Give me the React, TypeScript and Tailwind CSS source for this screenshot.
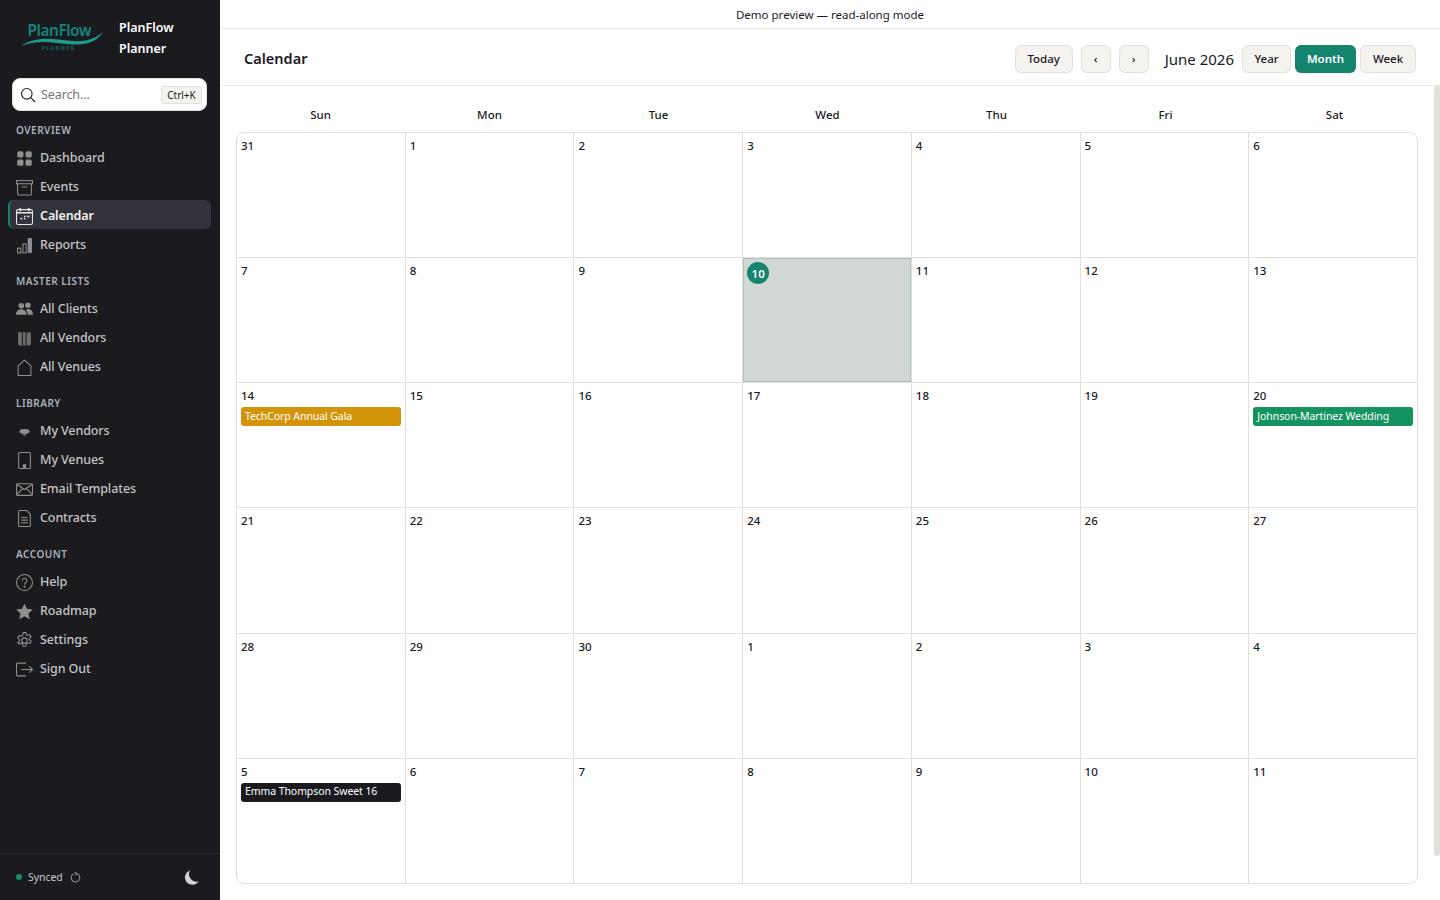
import type { ReactNode } from "react";

const FONT = "font-['Noto_Sans','Open_Sans',sans-serif]";

const icon = "h-[17px] w-[17px] shrink-0 text-[#8f8f8f]";
const line = { fill: "none", stroke: "currentColor", strokeWidth: 1 };

const Icons: Record<string, ReactNode> = {
  dashboard: (
    <svg className={icon} viewBox="0 0 16 16" fill="currentColor">
      <rect x="1.200" y="1.200" width="5.800" height="5.800" rx="1.500" />
      <rect x="9" y="1.200" width="5.800" height="5.800" rx="1.500" />
      <rect x="1.200" y="9" width="5.800" height="5.800" rx="1.500" />
      <rect x="9" y="9" width="5.800" height="5.800" rx="1.500" />
    </svg>
  ),
  events: (
    <svg className={icon} viewBox="0 0 16 16" {...line}>
      <rect x="0.500" y="1.500" width="15" height="3" />
      <path d="M1.500 4.500V14a1 1 0 0 0 1 1h11a1 1 0 0 0 1-1V4.500M5.500 7.500h5" />
    </svg>
  ),
  calendar: (
    <svg className="h-[17px] w-[17px] shrink-0 text-[#e8e8e8]" viewBox="0 0 16 16" {...line}>
      <rect x="0.500" y="1.500" width="15" height="14" rx="1.500" />
      <path d="M0.500 4.500h15M4 0v3M12 0v3" strokeWidth="1.400" />
      <path d="M4 10h2M7.500 10h1.500M10.500 8h2M7.500 8h1.500" strokeWidth="1.400" />
    </svg>
  ),
  reports: (
    <svg className={icon} viewBox="0 0 16 16">
      <rect x="1.500" y="10.500" width="3" height="4.500" {...line} />
      <rect x="6.500" y="6.500" width="3" height="8.500" {...line} />
      <rect x="11" y="1" width="4" height="14" fill="currentColor" />
    </svg>
  ),
  clients: (
    <svg className={icon} viewBox="0 0 16 16" fill="currentColor">
      <circle cx="5" cy="4.500" r="2.600" />
      <circle cx="11.200" cy="4" r="2.600" />
      <path d="M0 13c0-3.300 2.200-5.300 5-5.300s5 2 5 5.300zM11 13c0-2-.5-3.600-1.600-5 .6-.3 1.200-.4 1.900-.4 2.700 0 4.700 2 4.700 5.400z" />
    </svg>
  ),
  vendors: (
    <svg className="h-[17px] w-[17px] shrink-0 text-[#6f6f6f]" viewBox="0 0 16 16" fill="currentColor">
      <path d="M2 2h3.500v12.500H3L2 13.500zM6.500 2H9v12.500H6.500zM10 2.500l4-.5v11.500l-1 1h-3z" />
    </svg>
  ),
  venues: (
    <svg className={icon} viewBox="0 0 16 16" {...line}>
      <path d="M2 15.500V6.500L8 1l6 5.500v9z" strokeLinejoin="round" />
    </svg>
  ),
  myVendors: (
    <svg className={icon} viewBox="0 0 16 16" fill="currentColor">
      <ellipse cx="8" cy="8" rx="4.800" ry="2.300" />
      <rect x="6.500" y="10.800" width="3" height="1" />
    </svg>
  ),
  myVenues: (
    <svg className={icon} viewBox="0 0 16 16">
      <rect x="2.500" y="0.500" width="11" height="15" rx="1" {...line} />
      <rect x="6.500" y="11.500" width="3" height="3.500" fill="currentColor" />
    </svg>
  ),
  email: (
    <svg className={icon} viewBox="0 0 16 16" {...line}>
      <rect x="0.500" y="2.500" width="15" height="11" rx="1" />
      <path d="M0.500 3L8 8l7.500-5M0.500 13L6.500 7M15.500 13l-6-6" />
    </svg>
  ),
  contracts: (
    <svg className={icon} viewBox="0 0 16 16" {...line}>
      <path d="M2.500 1.500A1 1 0 0 1 3.500 .5H10l3.500 3.500v10.500a1 1 0 0 1-1 1h-9a1 1 0 0 1-1-1z" />
      <path d="M5 7h6M5 9.500h6M5 12h6" />
    </svg>
  ),
  help: (
    <svg className={icon} viewBox="0 0 16 16" {...line}>
      <circle cx="8" cy="8" r="7.500" />
      <path d="M5.800 6.200a2.200 2.200 0 1 1 3.500 1.800c-.8.500-1.300 1-1.300 2" />
      <circle cx="8" cy="12" r=".5" fill="currentColor" />
    </svg>
  ),
  roadmap: (
    <svg className={icon} viewBox="0 0 16 16" fill="currentColor">
      <path d="M8 .5l2.300 5 5.500.6-4.100 3.700 1.200 5.400L8 12.400l-4.900 2.800 1.200-5.400L.2 6.100l5.500-.6z" />
    </svg>
  ),
  settings: (
    <svg className={icon} viewBox="0 0 16 16" {...line}>
      <circle cx="8" cy="8" r="2.500" />
      <path d="M6.700.6h2.600l.4 2 1.200.6 1.900-.8 1.300 2.200-1.500 1.400v1.300l1.700 1.300-1.300 2.300-2.100-.7-1.200.7-.4 2.500H6.700l-.4-2.300-1.200-.7-2.100.8L1.700 9.900l1.600-1.300V7L1.700 5.600 3 3.300l2.100.8 1.200-.7z" strokeLinejoin="round" />
    </svg>
  ),
  signOut: (
    <svg className={icon} viewBox="0 0 16 16" {...line}>
      <path d="M9.500 2H1.500a1 1 0 0 0-1 1v10a1 1 0 0 0 1 1h8M5 8h10.500M12.500 5l3 3-3 3" />
    </svg>
  ),
};

const SECTIONS = [
  {
    title: "Overview",
    items: [
      ["Dashboard", "dashboard"],
      ["Events", "events"],
      ["Calendar", "calendar"],
      ["Reports", "reports"],
    ],
  },
  {
    title: "Master Lists",
    items: [
      ["All Clients", "clients"],
      ["All Vendors", "vendors"],
      ["All Venues", "venues"],
    ],
  },
  {
    title: "Library",
    items: [
      ["My Vendors", "myVendors"],
      ["My Venues", "myVenues"],
      ["Email Templates", "email"],
      ["Contracts", "contracts"],
    ],
  },
  {
    title: "Account",
    items: [
      ["Help", "help"],
      ["Roadmap", "roadmap"],
      ["Settings", "settings"],
      ["Sign Out", "signOut"],
    ],
  },
];

const WEEKDAYS = ["Sun", "Mon", "Tue", "Wed", "Thu", "Fri", "Sat"];

const DAYS = [
  31, 1, 2, 3, 4, 5, 6,
  7, 8, 9, 10, 11, 12, 13,
  14, 15, 16, 17, 18, 19, 20,
  21, 22, 23, 24, 25, 26, 27,
  28, 29, 30, 1, 2, 3, 4,
  5, 6, 7, 8, 9, 10, 11,
];

const EVENTS: Record<number, { label: string; color: string }> = {
  14: { label: "TechCorp Annual Gala", color: "bg-[#d4940a]" },
  20: { label: "Johnson-Martinez Wedding", color: "bg-[#15935f]" },
  35: { label: "Emma Thompson Sweet 16", color: "bg-[#1a1a1f]" },
};

function Logo() {
  return (
    <svg className="h-[36px] w-[86px] shrink-0" viewBox="0 0 86 36">
      <text x="8.500" y="18" fontSize="15.500" fontWeight="600" fill="#13857a" fontFamily="Noto Sans, sans-serif" letterSpacing="-0.5">
        PlanFlow
      </text>
      <path d="M2 28C10 22 22 20 34 21C50 22 68 28 84 14C74 30 54 27 38 25C24 23 12 24 2 28Z" fill="#1c9c8d" />
      <text x="23" y="31.500" fontSize="4.800" fontWeight="600" fill="#13756c" fontFamily="Noto Sans, sans-serif" letterSpacing="1.600">
        PLANNER
      </text>
    </svg>
  );
}

function Sidebar() {
  return (
    <aside className="flex h-full w-[220px] shrink-0 flex-col bg-[#1a1a1f]">
      <div className="flex h-[78px] items-center gap-[14px] pb-[6px] pl-[19px]">
        <Logo />
        <div className="pt-[4px] text-[12.500px] font-semibold leading-[21px] text-white">
          <div>PlanFlow</div>
          <div>Planner</div>
        </div>
      </div>

      <div className="mx-[12px] flex h-[33px] w-[195px] items-center rounded-lg border border-[#e2e0da] bg-white pl-[7px] pr-[4px]">
        <svg className="h-[16px] w-[16px] text-[#222]" viewBox="0 0 16 16" fill="none" stroke="currentColor" strokeWidth="1.100">
          <circle cx="6.800" cy="6.800" r="5.300" />
          <path d="M10.700 10.700L15 15" />
        </svg>
        <span className="ml-[5px] flex-1 pt-[2px] text-[12.500px] tracking-[-0.1px] text-[#757575]">Search...</span>
        <span className="flex h-[18px] w-[41px] items-center justify-center rounded-[3px] border border-[#e2e0da] bg-[#f4f3f0] pt-[1px] text-[10px] text-[#1a1a1f]">
          Ctrl+K
        </span>
      </div>

      <nav className="mt-[12px] flex flex-col gap-[16px]">
        {SECTIONS.map((section) => (
          <div key={section.title}>
            <div className="flex h-[14px] items-center pl-[16px] text-[10px] font-semibold uppercase tracking-[0.5px] text-[#a9b2ba]">
              {section.title}
            </div>
            <div className="mt-[5px] flex flex-col">
              {section.items.map(([label, key]) => {
                const active = label === "Calendar";
                return (
                  <div
                    className={
                      active
                        ? "mx-[8px] flex h-[29px] w-[203px] items-center gap-[7px] rounded-md border-l-2 border-[#14846f] bg-[#32323a] pl-[6px] pt-[4px] pb-[1px] text-[12.500px] font-semibold tracking-[-0.1px] text-[#f2f2f2]"
                        : "mx-[8px] flex h-[29px] w-[203px] items-center gap-[7px] pl-[8px] pt-[4px] pb-[1px] text-[12.500px] font-medium tracking-[-0.1px] text-[#c4c4c6]"
                    }
                    key={label}
                  >
                    {Icons[key]}
                    {label}
                  </div>
                );
              })}
            </div>
          </div>
        ))}
      </nav>

      <div className="mt-auto flex h-[47px] items-center border-t border-[#2a2a30] pl-[16px] pr-[21px]">
        <span className="h-[6px] w-[6px] rounded-full bg-[#15935f]" />
        <span className="ml-[6px] pt-[2px] text-[10.500px] tracking-[-0.05px] text-[#c4cbd2]">Synced</span>
        <svg className="ml-[7px] h-[11px] w-[11px] text-[#8f8f8f]" viewBox="0 0 12 12" fill="none" stroke="currentColor" strokeWidth="1.200">
          <path d="M7.500 1.700A4.700 4.700 0 1 1 3.800 2" />
          <path d="M5 0l2.500 1.700L5.500 3.800" />
        </svg>
        <svg className="ml-auto h-[15px] w-[15px] text-[#d4d4d4]" viewBox="0 0 16 16" fill="currentColor">
          <path d="M6.500.5A7.800 7.800 0 0 0 15.500 12 7.800 7.800 0 1 1 6.500.5z" />
        </svg>
      </div>
    </aside>
  );
}

function ToolButton({ children, className }: { children: ReactNode; className: string }) {
  return (
    <button className={`flex h-[28px] items-center justify-center rounded-md border border-[#e2e0da] bg-[#f4f3f0] text-[11.500px] font-medium text-[#1a1a1f] ${className}`}>
      {children}
    </button>
  );
}

function Header() {
  return (
    <header className="flex h-[57px] shrink-0 items-center border-b border-[#eceae6] bg-white px-[24px] pt-[4px]">
      <h1 className="text-[14.500px] font-semibold text-[#1a1a1f]">Calendar</h1>
      <div className="ml-auto flex items-center">
        <ToolButton className="w-[58px]">Today</ToolButton>
        <ToolButton className="ml-[8px] w-[30px] text-[10px]">‹</ToolButton>
        <ToolButton className="ml-[8px] w-[30px] text-[10px]">›</ToolButton>
        <span className="ml-[16px] text-[15px] font-normal text-[#1a1a1f]">June 2026</span>
        <ToolButton className="ml-[8px] w-[49px]">Year</ToolButton>
        <button className="ml-[4px] flex h-[28px] w-[61px] items-center justify-center rounded-md bg-[#14846f] text-[11.500px] font-semibold text-white">
          Month
        </button>
        <ToolButton className="ml-[4px] w-[56px]">Week</ToolButton>
      </div>
    </header>
  );
}

function DayCell({ day, index }: { day: number; index: number }) {
  const event = EVENTS[index];
  const today = index === 10;
  return (
    <div
      className={
        today
          ? "border border-[#a8c7bd] bg-[#d1d8d4] px-[3px] pt-[3px]"
          : "bg-white px-[4px] pt-[4px]"
      }
    >
      {today ? (
        <span className="flex h-[22px] w-[22px] items-center justify-center rounded-full bg-[#14846f] text-[11.500px] font-semibold text-white">
          {day}
        </span>
      ) : (
        <div className="h-[17px] text-[11.500px] font-medium leading-[17px] text-[#1a1a1f]">{day}</div>
      )}
      {event && (
        <div className={`mt-[3px] flex h-[19px] items-center truncate rounded-[3px] px-[4px] text-[10.500px] tracking-[-0.08px] text-white ${event.color}`}>
          {event.label}
        </div>
      )}
    </div>
  );
}

export default function App() {
  return (
    <div className={`flex h-[900px] w-[1440px] overflow-hidden bg-white ${FONT}`}>
      <Sidebar />
      <main className="flex min-w-0 flex-1 flex-col">
        <div className="flex h-[29px] shrink-0 items-center justify-center border-b border-[#eceae6] pt-[1px] text-[11.500px] text-[#1a1a1f]">
          Demo preview — read-along mode
        </div>
        <Header />
        <div className="relative flex min-h-0 flex-1 flex-col pb-[16px] pl-[16px] pr-[22px] pt-[16px]">
          <div className="mr-[-1px] grid h-[30px] shrink-0 grid-cols-7">
            {WEEKDAYS.map((name) => (
              <div className="pt-[4px] text-center text-[11.500px] font-medium text-[#1a1a1f]" key={name}>
                {name}
              </div>
            ))}
          </div>
          <div className="grid min-h-0 flex-1 grid-cols-7 grid-rows-6 gap-px overflow-hidden rounded-lg border border-[#e2e0da] bg-[#e2e0da]">
            {DAYS.map((day, index) => (
              <DayCell day={day} index={index} key={index} />
            ))}
          </div>
          <div className="absolute right-0 top-0 h-[770px] w-[6px] rounded-full bg-[#e2e0da]" />
        </div>
      </main>
    </div>
  );
}
